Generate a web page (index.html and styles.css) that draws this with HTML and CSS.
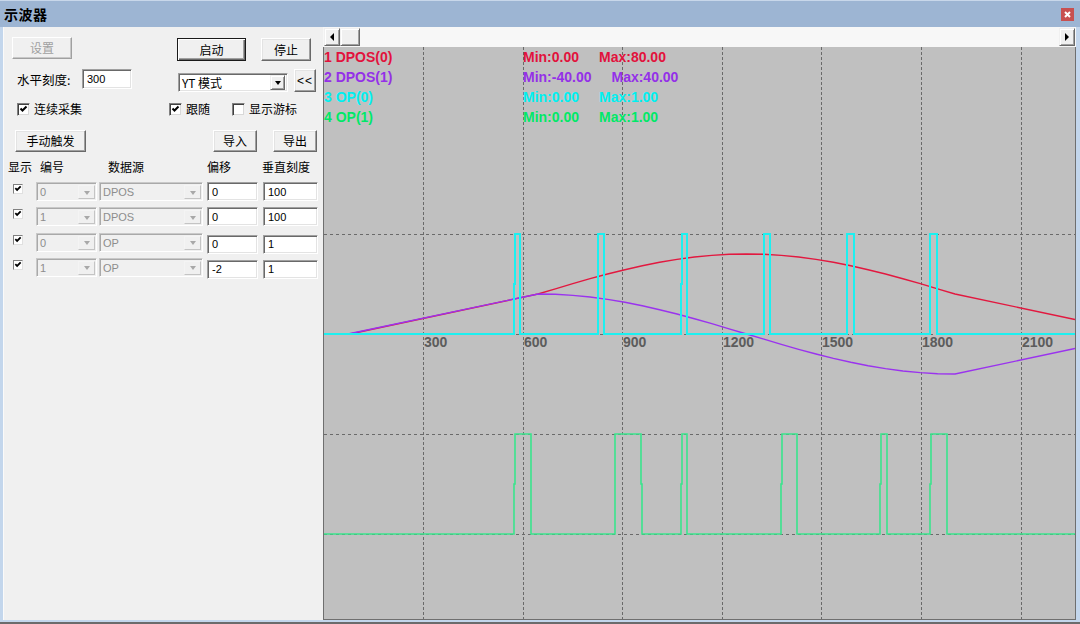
FILE: index.html
```html
<!DOCTYPE html>
<html lang="zh-CN">
<head>
<meta charset="utf-8">
<title>示波器</title>
<link rel="stylesheet" href="styles.css">
</head>
<body>
<div class="window">
  <div class="titlebar">
    <span class="title">示波器</span>
    <span class="close"><svg class="close-x" width="13" height="13" viewBox="0 0 13 13"><path d="M4 4L9 9M9 4L4 9"/></svg></span>
  </div>
  <div class="main">
    <div class="panel">
      <div class="row row-a">
        <div class="btn disabled b-set">设置</div>
        <div class="btn default b-start">启动</div>
        <div class="btn b-stop">停止</div>
      </div>
      <div class="row row-b">
        <span class="lbl">水平刻度:</span>
        <span class="edit e-scale">300</span>
        <span class="combo c-mode"><span class="combo-text">YT 模式</span><span class="combo-btn"><i class="tri"></i></span></span>
        <div class="btn b-back">&lt;&lt;</div>
      </div>
      <div class="row row-c">
        <span class="chk k1"><span class="box"><svg class="tick" viewBox="0 0 9 9"><path d="M1.5 3.5L3.5 5.5L7.5 1.5"/></svg></span>连续采集</span>
        <span class="chk k2"><span class="box"><svg class="tick" viewBox="0 0 9 9"><path d="M1.5 3.5L3.5 5.5L7.5 1.5"/></svg></span>跟随</span>
        <span class="chk k3"><span class="box"></span>显示游标</span>
      </div>
      <div class="row row-d">
        <div class="btn b-manual">手动触发</div>
        <div class="btn b-import">导入</div>
        <div class="btn b-export">导出</div>
      </div>
      <div class="row row-h">
        <span class="h1">显示</span>
        <span class="h2">编号</span>
        <span class="h3">数据源</span>
        <span class="h4">偏移</span>
        <span class="h5">垂直刻度</span>
      </div>
      <div class="chan-list">
        <div class="row chan">
          <span class="cb"><svg class="tick" viewBox="0 0 9 9"><path d="M1.5 3.5L3.5 5.5L7.5 1.5"/></svg></span>
          <span class="combo off sel-num"><span class="combo-text">0</span><span class="combo-btn"><i class="tri"></i></span></span>
          <span class="combo off sel-src"><span class="combo-text">DPOS</span><span class="combo-btn"><i class="tri"></i></span></span>
          <span class="edit ed-off">0</span>
          <span class="edit ed-scale">100</span>
        </div>
        <div class="row chan">
          <span class="cb"><svg class="tick" viewBox="0 0 9 9"><path d="M1.5 3.5L3.5 5.5L7.5 1.5"/></svg></span>
          <span class="combo off sel-num"><span class="combo-text">1</span><span class="combo-btn"><i class="tri"></i></span></span>
          <span class="combo off sel-src"><span class="combo-text">DPOS</span><span class="combo-btn"><i class="tri"></i></span></span>
          <span class="edit ed-off">0</span>
          <span class="edit ed-scale">100</span>
        </div>
        <div class="row chan">
          <span class="cb"><svg class="tick" viewBox="0 0 9 9"><path d="M1.5 3.5L3.5 5.5L7.5 1.5"/></svg></span>
          <span class="combo off sel-num"><span class="combo-text">0</span><span class="combo-btn"><i class="tri"></i></span></span>
          <span class="combo off sel-src"><span class="combo-text">OP</span><span class="combo-btn"><i class="tri"></i></span></span>
          <span class="edit ed-off low">0</span>
          <span class="edit ed-scale low">1</span>
        </div>
        <div class="row chan">
          <span class="cb"><svg class="tick" viewBox="0 0 9 9"><path d="M1.5 3.5L3.5 5.5L7.5 1.5"/></svg></span>
          <span class="combo off sel-num"><span class="combo-text">1</span><span class="combo-btn"><i class="tri"></i></span></span>
          <span class="combo off sel-src"><span class="combo-text">OP</span><span class="combo-btn"><i class="tri"></i></span></span>
          <span class="edit ed-off low">-2</span>
          <span class="edit ed-scale low">1</span>
        </div>
      </div>
    </div>
    <div class="scope">
      <div class="hscroll">
        <span class="sbtn"><i class="larr"></i></span>
        <span class="sbtn thumb"></span>
        <span class="track"></span>
        <span class="sbtn"><i class="rarr"></i></span>
      </div>
      <div class="plot">
        <svg class="chart" width="751" height="572" viewBox="324 47 751 572">
          <path class="grid-v" d="M423.5 47V619M523.5 47V619M622.5 47V619M722.5 47V619M821.5 47V619M921.5 47V619M1021.5 47V619"/>
          <path class="grid-h" d="M324 234.5H1075M324 334.5H1075M324 434.5H1075M324 534.5H1075"/>
          <g class="ax">
            <text x="424" y="347">300</text>
            <text x="524" y="347">600</text>
            <text x="623" y="347">900</text>
            <text x="723" y="347">1200</text>
            <text x="822" y="347">1500</text>
            <text x="922" y="347">1800</text>
            <text x="1022" y="347">2100</text>
          </g>
          <polyline class="trace t-red" points="350,334 538,294 555.4,288.8 572.8,283.7 590.1,278.7 607.5,274 624.9,269.7 642.3,265.7 659.6,262.3 677,259.4 694.4,257 711.8,255.4 729.1,254.3 746.5,254 763.9,254.3 781.3,255.4 798.6,257 816,259.4 833.4,262.3 850.8,265.7 868.1,269.7 885.5,274 902.9,278.7 920.3,283.7 937.6,288.8 955,294 1075,319.5"/>
          <polyline class="trace t-purple" points="348,334 538,294 555.4,294.3 572.8,295.4 590.1,297 607.5,299.4 624.9,302.3 642.3,305.7 659.6,309.7 677,314 694.4,318.7 711.8,323.7 729.1,328.8 746.5,334 763.9,339.2 781.3,344.4 798.6,349.3 816,354 833.4,358.4 850.8,362.3 868.1,365.7 885.5,368.6 902.9,371 920.3,372.6 937.6,373.7 955,374 1075,348.5"/>
          <path class="trace t-cyan" d="M324 334H514V284H515V234H520V334H598V234H604V334H681V284H682V234H687V334H764V234H770V334H847V234H854V334H930V234H937V334H1075"/>
          <path class="trace t-green" d="M324 534H514V484H515V434H531V534H615V434H641V484H642V534H681V484H682V434H687V534H781V484H782V434H797V534H880V484H881V434H887V534H930V484H931V434H947V534H1075"/>
        </svg>
        <div class="legend">
          <div class="lg-row c1"><span class="lg-name">1 DPOS(0)</span><span class="lg-val">Min:0.00</span><span class="lg-val">Max:80.00</span></div>
          <div class="lg-row c2"><span class="lg-name">2 DPOS(1)</span><span class="lg-val">Min:-40.00</span><span class="lg-val">Max:40.00</span></div>
          <div class="lg-row c3"><span class="lg-name">3 OP(0)</span><span class="lg-val">Min:0.00</span><span class="lg-val">Max:1.00</span></div>
          <div class="lg-row c4"><span class="lg-name">4 OP(1)</span><span class="lg-val">Min:0.00</span><span class="lg-val">Max:1.00</span></div>
        </div>
      </div>
    </div>
  </div>
</div>
</body>
</html>
```

FILE: styles.css
```css
* { box-sizing: border-box; }

body {
  margin: 0;
  background: #f0f0f0;
  font-family: "Noto Sans CJK SC", "Liberation Sans", sans-serif;
  font-size: 12px;
  color: #000;
}

.window {
  width: 1080px;
  height: 624px;
  display: flex;
  flex-direction: column;
  background: #c3d6ec;
  border-bottom: 2px solid #6b6b6b;
}

/* ---------- title bar ---------- */
.titlebar {
  height: 27px;
  flex: none;
  background: #9db5d3;
  border-top: 1px solid #c8d7ea;
  display: flex;
  align-items: center;
  justify-content: space-between;
  padding: 0 6px 0 4px;
}
.title {
  font-size: 14px;
  font-weight: 700;
  line-height: 16px;
  letter-spacing: 0.5px;
}
.close {
  width: 13px;
  height: 13px;
  background: #c85050;
  display: block;
  margin-top: 1px;
}
.close-x { display: block; }
.close-x path { stroke: #fff; stroke-width: 2; fill: none; }

/* ---------- main ---------- */
.main {
  flex: 1;
  display: flex;
  padding: 0 4px 2px 3px;
  min-height: 0;
}
.panel {
  width: 320px;
  flex: none;
  background: #f0f0f0;
  padding-top: 10px;
  box-shadow: inset 1px 0 #fafafa;
}
.row {
  display: flex;
  align-items: flex-start;
}

/* ---------- classic controls ---------- */
.btn {
  display: flex;
  align-items: center;
  justify-content: center;
  background: #f0f0f0;
  border: 1px solid;
  border-color: #fff #696969 #696969 #fff;
  box-shadow: inset -1px -1px #a0a0a0, inset 1px 1px #e3e3e3;
  font-size: 12px;
  line-height: 14px;
  flex: none;
}
.btn.default {
  border-color: #1a1a1a;
  box-shadow: inset 1px 1px #fff, inset -1px -1px #696969, inset -2px -2px #a0a0a0;
}
.btn.disabled {
  color: #a0a0a0;
  border-color: #fff #a0a0a0 #a0a0a0 #fff;
  box-shadow: inset -1px -1px #c8c8c8;
}

.edit {
  display: flex;
  align-items: center;
  flex: none;
  background: #fff;
  border: 1px solid;
  border-color: #a0a0a0 #fff #fff #a0a0a0;
  box-shadow: inset 1px 1px #696969, inset -1px -1px #e3e3e3;
  padding-left: 4px;
  font-family: "Liberation Sans", sans-serif;
  font-size: 11px;
  line-height: 12px;
}

.combo {
  display: flex;
  flex: none;
  background: #fff;
  border: 1px solid;
  border-color: #a0a0a0 #fff #fff #a0a0a0;
  box-shadow: inset 1px 1px #696969, inset -1px -1px #e3e3e3;
  padding: 2px;
}
.combo-text {
  flex: 1;
  display: flex;
  align-items: center;
  padding-left: 1px;
  font-size: 12px;
  line-height: 12px;
  white-space: nowrap;
}
.combo-btn {
  width: 15px;
  flex: none;
  background: #f0f0f0;
  border: 1px solid;
  border-color: #f0f0f0 #696969 #696969 #f0f0f0;
  box-shadow: inset 1px 1px #fff, inset -1px -1px #a0a0a0;
  display: flex;
  align-items: center;
  justify-content: center;
}
.tri {
  width: 0;
  height: 0;
  border-left: 3.5px solid transparent;
  border-right: 3.5px solid transparent;
  border-top: 4px solid #000;
  margin-top: 1px;
}

.combo.off {
  background: #f0f0f0;
  border-color: #c9c9c9 #fff #fff #c9c9c9;
  box-shadow: inset 1px 1px #a9a9a9;
  padding: 2px 1px 1px 2px;
}
.combo.off .combo-text {
  color: #8d8d8d;
  font-family: "Liberation Sans", sans-serif;
  font-size: 11px;
  background: #f0f0f0;
  padding-left: 1px;
}
.combo.off .combo-btn {
  width: 17px;
  border-color: #f4f4f4 #c4c4c4 #c4c4c4 #f4f4f4;
  box-shadow: none;
}
.combo.off .tri { border-top-color: #a8a8a8; }

/* checkboxes */
.chk {
  display: flex;
  align-items: center;
  flex: none;
  height: 16px;
  font-size: 12px;
  line-height: 14px;
}
.box {
  width: 13px;
  height: 13px;
  flex: none;
  margin-right: 4px;
  background: #fff;
  border: 1px solid;
  border-color: #808080 #f0f0f0 #f0f0f0 #808080;
  box-shadow: inset 1px 1px #404040, inset -1px -1px #d8d8d8;
  display: flex;
  align-items: center;
  justify-content: center;
}
.tick { width: 9px; height: 9px; display: block; }
.tick path { fill: none; stroke: #000; stroke-width: 2; }

/* row A */
.row-a { height: 24px; }
.b-set { margin-left: 9px; width: 60px; height: 22px; }
.b-start { margin-left: 105px; width: 69px; height: 23px; margin-top: 1px; }
.b-stop { margin-left: 15px; width: 50px; height: 23px; margin-top: 1px; }

/* row B */
.row-b { margin-top: 8px; height: 23px; }
.lbl { margin-left: 14px; width: 65px; line-height: 18px; margin-top: 2px; flex: none; font-size: 12.5px; }
.e-scale { width: 50px; height: 20px; }
.c-mode { margin-left: 46px; width: 110px; height: 19px; margin-top: 4px; padding: 1px 2px 1px 2px; }
.c-mode .combo-text { font-size: 12px; }
.b-back { margin-left: 6px; width: 22px; height: 23px; font-family: "Liberation Sans", sans-serif; font-size: 12px; letter-spacing: 1px; }

/* row C */
.row-c { margin-top: 9px; height: 16px; }
.k1 { margin-left: 14px; width: 152px; }
.k2 { width: 63px; }

/* row D */
.row-d { margin-top: 13px; height: 22px; }
.b-manual { margin-left: 12px; width: 71px; height: 22px; }
.b-import { margin-left: 127px; width: 44px; height: 22px; }
.b-export { margin-left: 16px; width: 44px; height: 22px; }

/* header */
.row-h { margin-top: 8px; height: 14px; line-height: 14px; font-size: 12px; }
.h1 { margin-left: 5px; width: 32px; }
.h2 { width: 68px; }
.h3 { width: 99px; }
.h4 { width: 55px; }

/* channel rows */
.chan-list {
  margin-top: 8px;
  display: flex;
  flex-direction: column;
  gap: 5.33px;
}
.chan { height: 20px; }
.cb {
  margin-left: 10px;
  margin-top: 2px;
  width: 10px;
  height: 10px;
  flex: none;
  background: #fff;
  border: 1px solid;
  border-color: #808080 #e0e0e0 #e0e0e0 #808080;
  display: flex;
  align-items: center;
  justify-content: center;
}
.cb .tick { width: 8px; height: 8px; }
.sel-num { margin-left: 13px; width: 61px; height: 19px; }
.sel-src { margin-left: 2px; width: 104px; height: 19px; }
.ed-off { margin-left: 4px; width: 51px; height: 19px; }
.ed-scale { margin-left: 5px; width: 55px; height: 19px; }
.edit.low { margin-top: 2px; }

/* ---------- scope ---------- */
.scope {
  width: 753px;
  flex: none;
  display: flex;
  flex-direction: column;
  background: #f6f6f6;
}
.hscroll {
  height: 20px;
  flex: none;
  display: flex;
  align-items: flex-start;
  padding: 1px 1px 0 1px;
  background: #f7f7f7;
}
.sbtn {
  width: 16px;
  height: 18px;
  flex: none;
  background: #f0f0f0;
  border: 1px solid;
  border-color: #f0f0f0 #696969 #696969 #f0f0f0;
  box-shadow: inset 1px 1px #fff, inset -1px -1px #a0a0a0;
  display: flex;
  align-items: center;
  justify-content: center;
}
.thumb { width: 20px; }
.track { flex: 1; }
.larr {
  width: 0; height: 0;
  border-top: 4px solid transparent;
  border-bottom: 4px solid transparent;
  border-right: 4px solid #000;
}
.rarr {
  width: 0; height: 0;
  border-top: 4px solid transparent;
  border-bottom: 4px solid transparent;
  border-left: 4px solid #000;
}

.plot {
  flex: 1;
  position: relative;
  background: #c0c0c0;
  border: 1px solid #6f6f6f;
  border-top: none;
}
.chart { display: block; }
.grid-v { stroke: #6a6a6a; stroke-width: 1; stroke-dasharray: 3 2; fill: none; }
.grid-h { stroke: #6a6a6a; stroke-width: 1; stroke-dasharray: 3 3; fill: none; }
.ax text {
  font-family: "Liberation Sans", sans-serif;
  font-weight: 700;
  font-size: 14px;
  fill: #5c5c5c;
}
.trace { fill: none; stroke-linejoin: miter; }
.t-red { stroke: #e2183f; stroke-width: 1.4; }
.t-purple { stroke: #9a33ee; stroke-width: 1.4; }
.t-cyan { stroke: #1cf0f0; stroke-width: 2; }
.t-green { stroke: #3ae48c; stroke-width: 1.6; }

.legend {
  position: absolute;
  top: 0;
  left: 0;
  font-family: "Liberation Sans", sans-serif;
  font-size: 14px;
  line-height: 20px;
}
.lg-row { display: flex; height: 20px; white-space: nowrap; }
.lg-name { width: 199px; flex: none; font-weight: 700; }
.lg-val { font-weight: 700; margin-right: 20px; }
.c1 { color: #e2123c; }
.c2 { color: #9430e8; }
.c3 { color: #00f0f0; }
.c4 { color: #00e868; }
```
